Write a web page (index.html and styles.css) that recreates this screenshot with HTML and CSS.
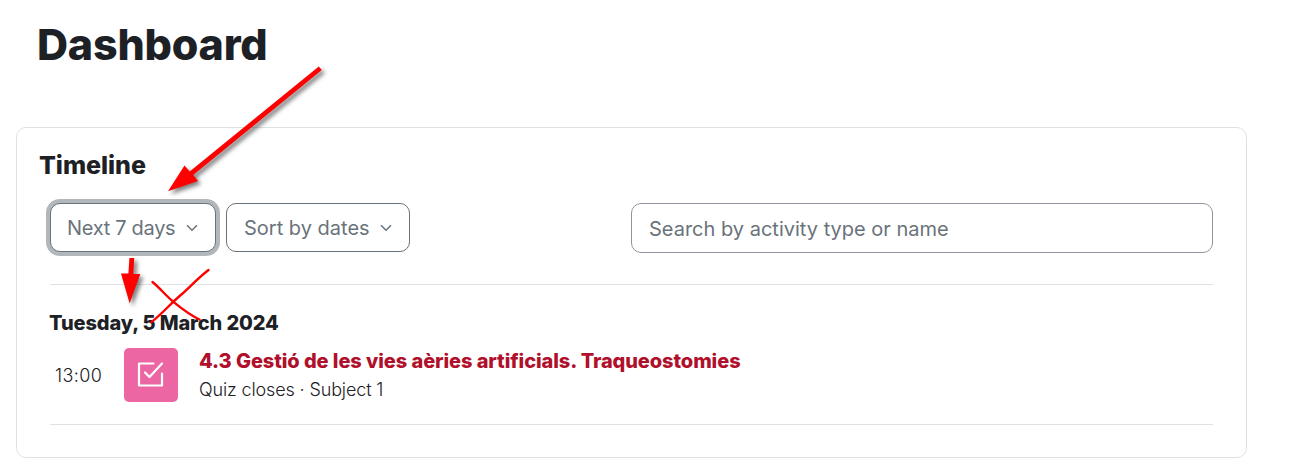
FILE: index.html
```
<!DOCTYPE html>
<html lang="en">
<head>
    <meta charset="UTF-8">
    <link rel="stylesheet" href="styles.css">
    <title>Dashboard</title>
</head>
<body>
<h1 class="page_title">Dashboard</h1>

<section class="card">
    <h2 class="card_title">Timeline</h2>

    <div class="filters">
        <button class="btn focus" type="button">
            <span>Next 7 days</span>
            <svg class="caret" viewBox="0 0 12 8"><path d="M1 1.2L6 6.2L11 1.2"/></svg>
        </button>
        <button class="btn sort" type="button">
            <span>Sort by dates</span>
            <svg class="caret" viewBox="0 0 12 8"><path d="M1 1.2L6 6.2L11 1.2"/></svg>
        </button>
        <input class="search" type="text" placeholder="Search by activity type or name">
    </div>

    <div class="events">
        <h3 class="date">Tuesday, 5 March 2024</h3>
        <div class="event">
            <span class="time">13:00</span>
            <div class="icon">
                <svg viewBox="0 0 54 54"><path d="M29.5 15.5H15V37.5H38V25.5"/><path d="M21 24.5L25.5 29L38 15.5"/></svg>
            </div>
            <div class="info">
                <a class="name" href="#">4.3 Gestió de les vies aèries artificials. Traqueostomies</a>
                <span class="sub">Quiz closes · Subject 1</span>
            </div>
        </div>
    </div>
</section>

<!-- hand-drawn marks over the page -->
<svg class="marks" width="1304" height="469" viewBox="0 0 1304 469">
    <g class="arrow">
        <path d="M318.8 66.4L321.8 70L193.2 175L198 181L168 191.3L184.5 165.5L189.7 171.5Z"/>
        <path d="M129.4 258H134.2L133.4 274H140.3L129.6 303.3L121 273.6H128.4Z"/>
    </g>
    <g class="cross">
        <path d="M152.5 282C160 288 165 295 173 301.5C181 308 188 314 199.5 319.5"/>
        <path d="M208.5 270C198 278 190 287 182 294C171 303 162 314 151.5 322"/>
    </g>
</svg>
</body>
</html>
```
FILE: styles.css
```
* {
    box-sizing: border-box;
    margin: 0;
    padding: 0;
}

body {
    position: relative;
    height: 469px;
    overflow: hidden;
    background: #fff;
    color: #1d2125;
    font-family: Inter, "Liberation Sans", sans-serif;
}

.page_title {
    padding: 15px 0 0 37px;
    height: 127px;
    font-size: 43px;
    font-weight: 800;
    letter-spacing: -0.2px;
    line-height: 58px;
}

.card {
    width: 1231px;
    height: 331px;
    margin-left: 16px;
    padding: 22px 33px 0;
    border: 1px solid #dee2e6;
    border-radius: 10px;
}

.card_title {
    margin-left: -11px;
    font-size: 25px;
    font-weight: 800;
    letter-spacing: -0.05px;
    line-height: 30px;
}

.filters {
    display: flex;
    align-items: flex-start;
    height: 81px;
    margin-top: 23px;
}

.btn {
    display: flex;
    align-items: center;
    justify-content: space-between;
    width: 166px;
    height: 49px;
    padding: 0 17px 0 16px;
    border: 1px solid #6a737b;
    border-radius: 10px;
    background: #fff;
    color: #6a737b;
    font: 400 20px Inter, "Liberation Sans", sans-serif;
    white-space: nowrap;
}

.focus {
    box-shadow: 0 0 0 4px #b2b7bb;
    letter-spacing: -0.3px;
}

.sort {
    width: 184px;
    margin-left: 10px;
    padding-left: 17px;
}

.caret {
    width: 12px;
    height: 8px;
    fill: none;
    stroke: #6a737b;
    stroke-width: 1.5;
}

.search {
    width: 582px;
    height: 50px;
    margin-left: auto;
    padding: 2px 17px 0;
    border: 1px solid #8f959e;
    border-radius: 10px;
    font: 400 20px Inter, "Liberation Sans", sans-serif;
}

.search::placeholder {
    color: #6a737b;
    opacity: 1;
}

.events {
    height: 141px;
    padding-top: 23px;
    border-top: 1px solid #dee2e6;
    border-bottom: 1px solid #dee2e6;
}

.date {
    margin-left: -1px;
    font-size: 20px;
    font-weight: 800;
    letter-spacing: -0.12px;
    line-height: 30px;
}

.event {
    display: flex;
    align-items: center;
    height: 54px;
    margin-top: 10px;
}

.time {
    width: 74px;
    padding: 1px 0 0 5px;
    font-size: 18px;
    font-weight: 300;
    letter-spacing: 0.4px;
}

.icon {
    width: 54px;
    height: 54px;
    border-radius: 5px;
    background: #eb66a2;
}

.icon svg {
    display: block;
    fill: none;
    stroke: #fff;
    stroke-width: 2.2;
    stroke-linecap: round;
    stroke-linejoin: round;
}

.info {
    display: flex;
    flex-direction: column;
    margin-left: 21px;
    white-space: nowrap;
}

.name {
    color: #b0102b;
    font-size: 20px;
    font-weight: 800;
    letter-spacing: -0.08px;
    line-height: 30px;
    text-decoration: none;
}

.sub {
    font-size: 18px;
    font-weight: 300;
    letter-spacing: -0.14px;
    line-height: 28px;
}

.marks {
    position: absolute;
    left: 0;
    top: 0;
    pointer-events: none;
}

.arrow {
    fill: #f00;
    filter: drop-shadow(3px 3px 2px rgba(0, 0, 0, .5));
}

.cross {
    fill: none;
    stroke: #f00;
    stroke-width: 2.4;
    stroke-linecap: round;
}
```
